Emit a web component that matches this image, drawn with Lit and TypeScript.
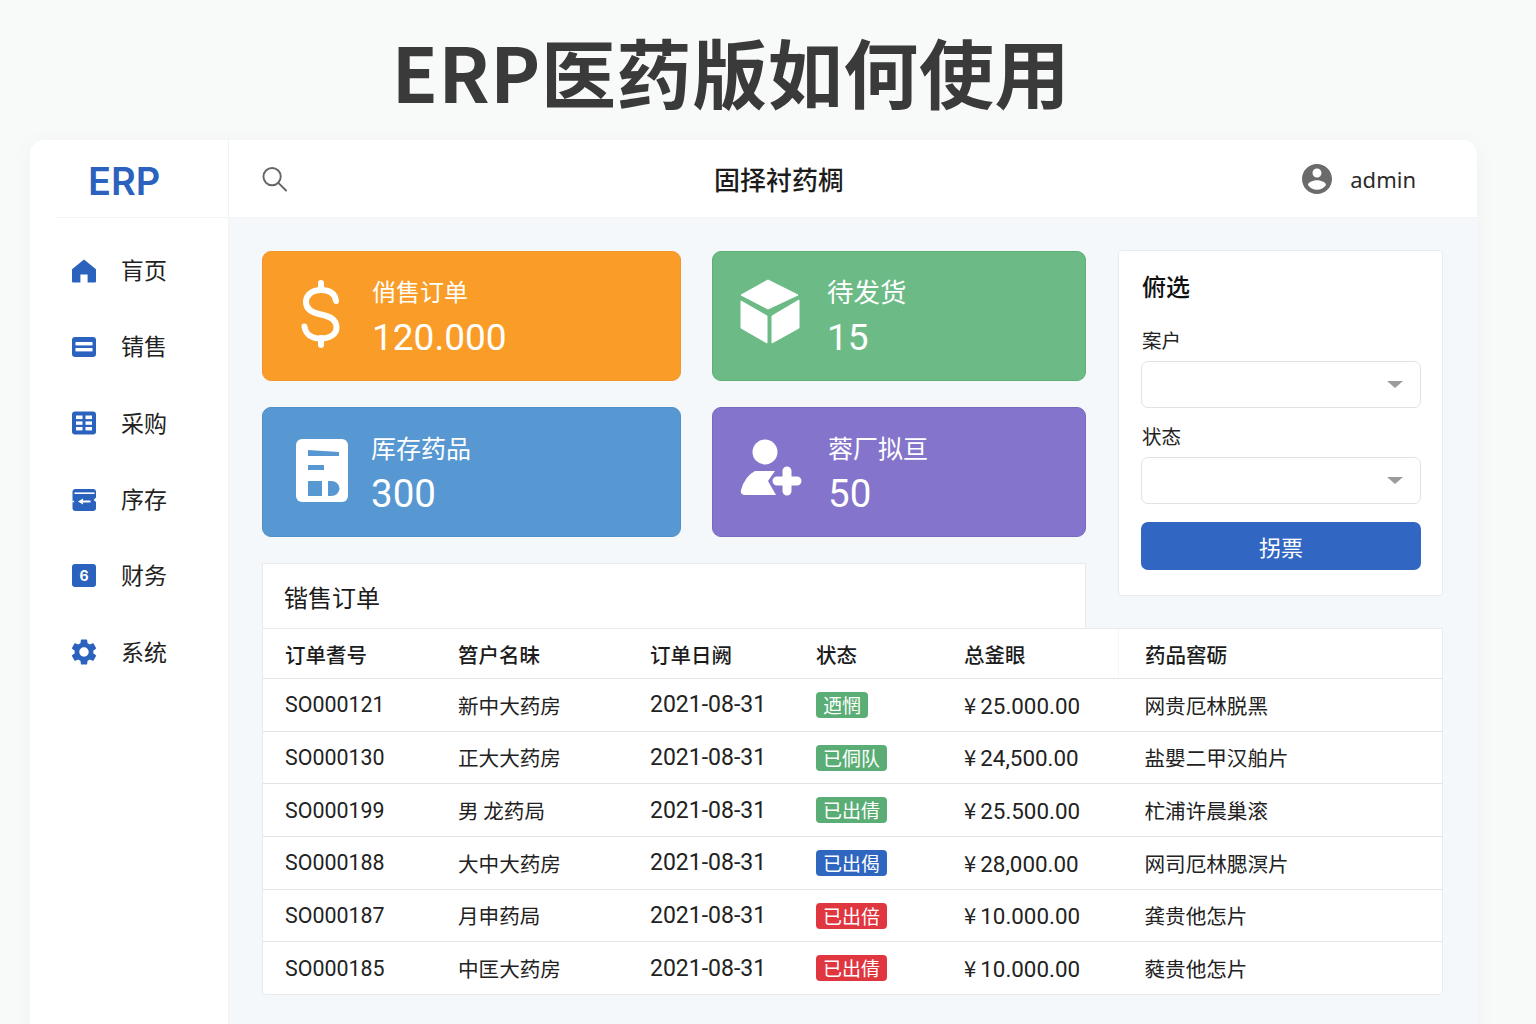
import { LitElement, css, html, svg } from 'lit';
import { customElement } from 'lit/decorators.js';

const navIcons = {
  home: svg`<path d="M12 .5 24 10.200V22.500a1 1 0 0 1-1 1H15.600V15.500H8.400V23.500H1a1 1 0 0 1-1-1V10.200z" fill="#2a62be"/>`,
  sales: svg`<rect x="0" y="2" width="24" height="20" rx="3" fill="#2a62be"/><rect x="3.500" y="7" width="17" height="3.400" fill="#fff"/><rect x="3.500" y="13" width="17" height="3.400" fill="#fff"/>`,
  purchase: svg`<rect x="0" y="0.500" width="24" height="23" rx="3" fill="#2a62be"/><g fill="#fff"><rect x="4" y="4.500" width="6.500" height="3.600"/><rect x="13.500" y="4.500" width="6.500" height="3.600"/><rect x="4" y="10.400" width="6.500" height="3.400"/><rect x="13.500" y="10.400" width="6.500" height="3.400"/><rect x="4" y="16" width="6.500" height="3.400"/><rect x="13.500" y="16" width="6.500" height="3.400"/></g>`,
  stock: svg`<rect x="0.500" y="1" width="23.500" height="22" rx="3" fill="#2a62be"/><rect x="2.500" y="4.400" width="20" height="1.600" fill="#fff"/><path d="M6 13.400 11 10.600v2h7.500v1.800H11v2z" fill="#fff"/><path d="M24 9.500l-2.400 2.400L24 14z" fill="#fff"/><path d="M0.500 12 2.400 13.600.5 15z" fill="#fff"/>`,
  gear: svg`<path transform="translate(-3.600 -3.600) scale(1.300)" d="M19.140 12.940c.04-.3.06-.61.06-.94 0-.32-.02-.64-.07-.94l2.030-1.580c.18-.14.23-.41.12-.61l-1.920-3.320c-.12-.22-.37-.29-.59-.22l-2.390.96c-.5-.38-1.030-.7-1.620-.94l-.36-2.540c-.04-.24-.24-.41-.48-.41h-3.840c-.24 0-.43.17-.47.41l-.36 2.540c-.59.24-1.130.57-1.620.94l-2.390-.96c-.22-.08-.47 0-.59.22L2.740 8.870c-.12.21-.08.47.12.61l2.030 1.580c-.05.3-.09.63-.09.94s.02.64.07.94l-2.030 1.580c-.18.14-.23.41-.12.61l1.920 3.320c.12.22.37.29.59.22l2.390-.96c.5.38 1.030.7 1.620.94l.36 2.540c.05.24.24.41.48.41h3.840c.24 0 .44-.17.47-.41l.36-2.540c.59-.24 1.130-.56 1.620-.94l2.390.96c.22.08.47 0 .59-.22l1.920-3.320c.12-.22.07-.47-.12-.61l-2.010-1.580zM12 15.600c-1.980 0-3.600-1.620-3.600-3.600s1.620-3.600 3.600-3.600 3.600 1.620 3.600 3.600-1.620 3.600-3.600 3.600z" fill="#2a62be"/>`,
};

const navItems = [
  { icon: navIcons.home, label: '肓页' },
  { icon: navIcons.sales, label: '锖售' },
  { icon: navIcons.purchase, label: '采购' },
  { icon: navIcons.stock, label: '序存' },
  { icon: null, label: '财务' },
  { icon: navIcons.gear, label: '系统' },
];

const rows = [
  { no: 'SO000121', client: '新中大药房', amount: '25.000.00', tag: '迺惘', kind: 'green', drug: '网贵厄林脱黑' },
  { no: 'SO000130', client: '正大大药房', amount: '24,500.00', tag: '已侗队', kind: 'green', drug: '盐嬰二甲汉舶片' },
  { no: 'SO000199', client: '男 龙药局', amount: '25.500.00', tag: '已出倩', kind: 'green', drug: '杧浦许晨巢滚' },
  { no: 'SO000188', client: '大中大药房', amount: '28,000.00', tag: '已出偈', kind: 'blue', drug: '网司厄林腮溟片' },
  { no: 'SO000187', client: '月申药局', amount: '10.000.00', tag: '已出倍', kind: 'red', drug: '龚贵他怎片' },
  { no: 'SO000185', client: '中匡大药房', amount: '10.000.00', tag: '已出倩', kind: 'red', drug: '蕤贵他怎片' },
];

@customElement('app-root')
export class AppRoot extends LitElement {
  static styles = css`
    :host {
      display: block;
      height: 1024px;
      overflow: hidden;
      background: #f8f9f9;
      font-family: Roboto, "Noto Sans CJK SC", sans-serif;
      color: #222;
    }

    .headline {
      height: 140px;
      display: flex;
      justify-content: center;
      align-items: center;
      padding-right: 74px;
      margin: 0;
      font-family: "Noto Sans CJK SC", sans-serif;
      font-size: 75px;
      font-weight: 700;
      letter-spacing: 0.6px;
      line-height: 1;
      color: #3a3a3a;
    }

    .window {
      width: 1447px;
      margin-left: 30px;
      height: 900px;
      display: flex;
      background: #fff;
      border-radius: 14px 14px 0 0;
      box-shadow: 0 4px 24px rgb(0 0 0 / 0.04);
      overflow: hidden;
    }

    .sidebar {
      width: 198px;
      flex: none;
      border-right: 1px solid #f1f3f5;
    }

    .logo {
      height: 78px;
      margin-left: 27px;
      padding: 4px 0 0 31px;
      display: flex;
      align-items: center;
      border-bottom: 1px solid #f1f3f5;
      box-sizing: border-box;
      font-family: Inter, sans-serif;
      font-size: 38px;
      font-weight: 600;
      color: #2a62be;
    }

    .nav {
      padding: 13px 0 0 42px;
    }

    .nav-item {
      height: 76.3px;
      display: flex;
      align-items: center;
      gap: 25px;
      font-family: "Noto Sans CJK SC", sans-serif;
      font-size: 23px;
      color: #222;
    }

    .nav-icon {
      width: 24px;
      height: 24px;
      flex: none;
      margin-top: 3px;
      overflow: visible;
    }

    .six {
      display: flex;
      align-items: center;
      justify-content: center;
      width: 24px;
      height: 23px;
      margin-top: 3px;
      border-radius: 3px;
      background: #2a62be;
      color: #fff;
      font-family: Inter, sans-serif;
      font-size: 14px;
      font-weight: 700;
    }

    .content {
      flex: 1;
      min-width: 0;
    }

    .topbar {
      height: 78px;
      box-sizing: border-box;
      display: flex;
      align-items: center;
      padding: 0 61px 0 33px;
      border-bottom: 1px solid #f1f3f5;
    }

    .search {
      width: 452px;
      display: flex;
    }

    .page-name {
      font-family: "Noto Sans CJK SC", sans-serif;
      font-size: 26px;
      font-weight: 500;
      color: #1c1c1c;
    }

    .user {
      margin-left: auto;
      display: flex;
      align-items: center;
      gap: 18px;
      font-size: 22px;
      color: #2b2b2b;
      font-family: "Noto Sans", sans-serif;
    }

    .main {
      height: 822px;
      box-sizing: border-box;
      background: #f5f8fb;
      padding: 32px 34px 0 33px;
    }

    .upper {
      display: grid;
      grid-template-columns: 824px 325px;
      column-gap: 32px;
      align-items: start;
    }

    .stats {
      padding-top: 1px;
      display: grid;
      grid-template-columns: 419px 374px;
      gap: 26.5px 31px;
    }

    .stat {
      height: 129.5px;
      box-sizing: border-box;
      display: flex;
      align-items: center;
      border-radius: 9px;
      color: #fff;
      border: 1px solid;
    }

    .orange { background: #f99d28; border-color: #f2952a; }
    .green { background: #6cbb86; border-color: #5fae79; }
    .sky { background: #5797d2; border-color: #4f8fca; }
    .violet { background: #8474cb; border-color: #7a69c2; }

    .stat-icon {
      flex: none;
      box-sizing: border-box;
      display: flex;
    }

    .orange .stat-icon { width: 109px; padding-left: 38px; margin-top: -4px; }
    .sky .stat-icon { width: 108px; padding-left: 33px; margin-top: -2px; }
    .green .stat-icon { width: 114px; padding-left: 27px; margin-top: -8px; }
    .violet .stat-icon { width: 115px; padding-left: 27px; margin-top: -8px; }

    .stat-text {
      padding-top: 4px;
    }

    .stat-label {
      font-family: "Noto Sans CJK SC", sans-serif;
      font-size: 24px;
      line-height: 32px;
      margin-bottom: 9px;
    }

    .green .stat-label { font-size: 26.5px; }
    .sky .stat-label,
    .violet .stat-label { font-size: 25px; }

    .stat-value {
      font-size: 37px;
      line-height: 44px;
    }

    .sky .stat-value,
    .violet .stat-value { font-size: 38.5px; }

    .orders-title {
      margin-top: 26.5px;
      height: 65px;
      box-sizing: border-box;
      display: flex;
      align-items: center;
      padding-left: 21px;
      background: #fff;
      border: 1px solid #e8ebee;
      border-bottom: 0;
      font-family: "Noto Sans CJK SC", sans-serif;
      font-size: 24px;
      color: #1c1c1c;
    }

    .filter {
      box-sizing: border-box;
      height: 346px;
      padding: 19px 21px 0 22px;
      background: #fff;
      border: 1px solid #e8ebee;
      border-radius: 4px;
    }

    .filter-title {
      font-family: "Noto Sans CJK SC", sans-serif;
      font-size: 24px;
      font-weight: 500;
      line-height: 32px;
      color: #111;
      margin-bottom: 26px;
      padding-left: 1px;
    }

    .field-label {
      font-family: "Noto Sans CJK SC", sans-serif;
      font-size: 19.5px;
      line-height: 24px;
      margin-bottom: 9px;
      padding-left: 1px;
      color: #222;
    }

    .select {
      height: 47px;
      margin-bottom: 16px;
      box-sizing: border-box;
      display: flex;
      align-items: center;
      justify-content: flex-end;
      padding-right: 17px;
      border: 1px solid #dfe2e6;
      border-radius: 7px;
      background: #fff;
    }

    .caret {
      width: 0;
      height: 0;
      border-left: 8px solid transparent;
      border-right: 8px solid transparent;
      border-top: 7px solid #9b9b9b;
    }

    .action {
      display: block;
      width: 100%;
      height: 48px;
      margin-top: 18px;
      border: none;
      border-radius: 7px;
      background: #3167c2;
      color: #fff;
      font-family: "Noto Sans CJK SC", sans-serif;
      font-size: 22px;
    }

    .table-box {
      background: #fff;
      border: 1px solid #e8ebee;
      border-radius: 0 0 4px 4px;
    }

    table {
      width: 100%;
      table-layout: fixed;
      border-collapse: collapse;
    }

    th,
    td {
      padding: 0;
      text-align: left;
      border-bottom: 1px solid #e2e5e8;
    }

    tr:last-child td {
      border-bottom: 0;
    }

    th {
      height: 49px;
      font-family: "Noto Sans CJK SC", sans-serif;
      font-size: 20.5px;
      font-weight: 500;
      color: #1c1c1c;
    }

    td {
      height: 51.7px;
      font-size: 21.4px;
      line-height: 1;
      color: #222;
    }

    .c1 { width: 195px; padding-left: 22px; box-sizing: border-box; }
    .c2 { width: 192px; }
    .c3 { width: 166px; font-size: 23px; }
    .c4 { width: 148px; }
    .c5 { width: 154px; font-size: 22.4px; }
    .c6 { padding-left: 26px; }
    th.c3 { font-size: 20.5px; }
    th.c5 { font-size: 20.5px; }
    th.c6 { border-left: 1px solid #f3f5f6; }

    td.zh {
      font-family: "Noto Sans CJK SC", sans-serif;
      font-size: 20.6px;
    }

    .yen {
      font-family: "Noto Sans CJK SC", sans-serif;
      font-size: 22px;
      line-height: 1;
      margin-right: 4px;
    }

    .tag {
      display: inline-block;
      padding: 0 7px;
      height: 26px;
      line-height: 25px;
      border-radius: 4px;
      vertical-align: middle;
      font-family: "Noto Sans CJK SC", sans-serif;
      font-size: 19px;
      color: #fff;
    }

    .tag.green { background: #5aad74; }
    .tag.blue { background: #2f66c0; }
    .tag.red { background: #e0363f; }
  `;

  renderStat(kind: string, icon: unknown, label: string, value: string) {
    return html`
      <div class="stat ${kind}">
        <div class="stat-icon">${icon}</div>
        <div class="stat-text">
          <div class="stat-label">${label}</div>
          <div class="stat-value">${value}</div>
        </div>
      </div>
    `;
  }

  render() {
    const dollar = html`<svg width="40" height="68" viewBox="0 0 40 68" fill="none" stroke="#fff" stroke-width="6" stroke-linecap="round">
      <path d="M20 3v7M20 58v7"/>
      <path d="M35 21C34 13 28 10 20 10 11 10 5 15 5 22c0 8 7 11 15 12.500 9 2 15.500 5 15.500 13 0 7-7 11-15.500 11-9 0-15.500-4-16.500-12"/>
    </svg>`;
    const cube = html`<svg width="60" height="66" viewBox="0 0 60 66" fill="#fff" stroke="#fff" stroke-linejoin="round">
      <path d="M28 1 58 16 28 30 1 16z"/>
      <path d="M1 22 27 37V64L1 49z"/>
      <path d="M32 37 59 21V49L32 64z"/>
    </svg>`;
    const doc = html`<svg width="52" height="63" viewBox="0 0 52 63">
      <rect width="52" height="63" rx="6" fill="#fff"/>
      <g fill="#5797d2">
        <path d="M12 11 43 13V17H12z"/>
        <rect x="12" y="26" width="16" height="5"/>
        <rect x="12" y="42" width="14" height="15"/>
        <path d="M32 42h3c5 0 8 3 8.500 7.500C43 54 40 57 35 57h-3z"/>
      </g>
    </svg>`;
    const personAdd = html`<svg width="62" height="57" viewBox="0 0 62 57" fill="#fff">
      <circle cx="25" cy="13" r="12.500"/>
      <path d="M15 32H35L28 42 36 56H5Q0 56 1 51 5 37 15 32Z"/>
      <path d="M37 42H57M47 32V52" stroke="#fff" stroke-width="9" stroke-linecap="round"/>
    </svg>`;

    return html`
      <h1 class="headline">ERP医药版如何使用</h1>
      <div class="window">
        <aside class="sidebar">
          <div class="logo">ERP</div>
          <nav class="nav">
            ${navItems.map(
              (item) => html`
                <div class="nav-item">
                  ${item.icon
                    ? html`<svg class="nav-icon" viewBox="0 0 24 24">${item.icon}</svg>`
                    : html`<div class="six">6</div>`}
                  <span>${item.label}</span>
                </div>
              `
            )}
          </nav>
        </aside>
        <div class="content">
          <header class="topbar">
            <div class="search">
              <svg width="25" height="26" viewBox="0 0 26 26" fill="none" stroke="#666" stroke-width="2" stroke-linecap="round">
                <circle cx="10.500" cy="10.500" r="9"/>
                <path d="M17 17l8 8"/>
              </svg>
            </div>
            <div class="page-name">固择衬药椆</div>
            <div class="user">
              <svg width="30" height="30" viewBox="2 2 20 20" fill="#6b6b6b">
                <path d="M12 2C6.480 2 2 6.480 2 12s4.480 10 10 10 10-4.480 10-10S17.520 2 12 2zm0 3c1.660 0 3 1.340 3 3s-1.340 3-3 3-3-1.340-3-3 1.340-3 3-3zm0 14.200c-2.500 0-4.710-1.280-6-3.220.030-1.990 4-3.080 6-3.080 1.990 0 5.970 1.090 6 3.080-1.290 1.940-3.500 3.220-6 3.220z"/>
              </svg>
              <span>admin</span>
            </div>
          </header>
          <main class="main">
            <div class="upper">
              <div>
                <div class="stats">
                  ${this.renderStat('orange', dollar, '俏售订单', '120.000')}
                  ${this.renderStat('green', cube, '待发货', '15')}
                  ${this.renderStat('sky', doc, '厍存药品', '300')}
                  ${this.renderStat('violet', personAdd, '蓉厂拟亘', '50')}
                </div>
                <div class="orders-title">锴售订单</div>
              </div>
              <section class="filter">
                <div class="filter-title">俯选</div>
                <div class="field-label">案户</div>
                <div class="select"><span class="caret"></span></div>
                <div class="field-label">状态</div>
                <div class="select"><span class="caret"></span></div>
                <button class="action">拐票</button>
              </section>
            </div>
            <div class="table-box">
              <table>
                <thead>
                  <tr>
                    <th class="c1">订单耆号</th>
                    <th class="c2">笤户名昧</th>
                    <th class="c3">订单日阙</th>
                    <th class="c4">状态</th>
                    <th class="c5">总釜眼</th>
                    <th class="c6">药品窖砺</th>
                  </tr>
                </thead>
                <tbody>
                  ${rows.map(
                    (row) => html`
                      <tr>
                        <td class="c1">${row.no}</td>
                        <td class="c2 zh">${row.client}</td>
                        <td class="c3">2021-08-31</td>
                        <td class="c4"><span class="tag ${row.kind}">${row.tag}</span></td>
                        <td class="c5"><span class="yen">¥</span>${row.amount}</td>
                        <td class="c6 zh">${row.drug}</td>
                      </tr>
                    `
                  )}
                </tbody>
              </table>
            </div>
          </main>
        </div>
      </div>
    `;
  }
}
